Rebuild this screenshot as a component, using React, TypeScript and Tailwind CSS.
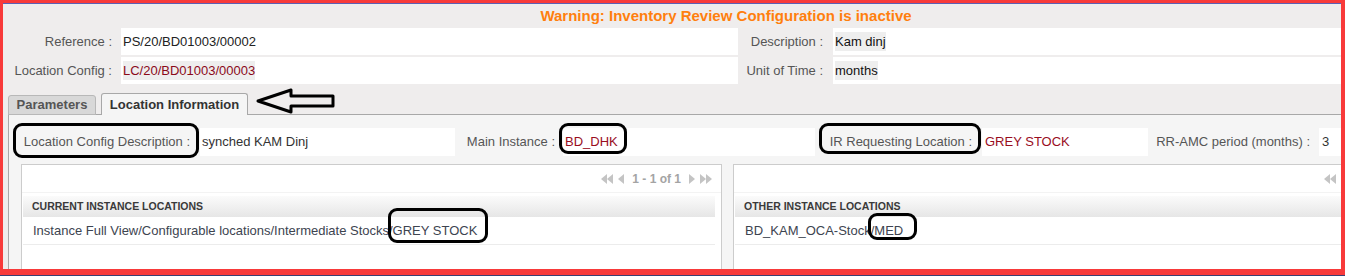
import React from "react";

const Tri = ({ dir, double }: { dir: "l" | "r"; double?: boolean }) => (
  <svg width={double ? 14 : 8} height="12" viewBox={double ? "0 0 14 12" : "0 0 8 12"} className="fill-[#c4c4c4]">
    {dir === "l" ? (
      double ? (
        <>
          <polygon points="1,6 7,1 7,11" />
          <polygon points="7,6 13,1 13,11" />
        </>
      ) : (
        <polygon points="1,6 7,1 7,11" />
      )
    ) : double ? (
      <>
        <polygon points="1,1 7,6 1,11" />
        <polygon points="7,1 13,6 7,11" />
      </>
    ) : (
      <polygon points="1,1 7,6 1,11" />
    )}
  </svg>
);

const Mark = ({ cls }: { cls: string }) => (
  <div className={`absolute rounded-[9px] border-[3px] border-black ${cls}`} />
);

export default function App() {
  return (
    <div className="relative h-[276px] w-[1345px] overflow-hidden bg-[#f83a3a] pl-[3px] pr-[4px] pt-[3px] pb-[6px] border-b border-[#3b3f72] font-['Liberation_Sans',Arial,sans-serif] text-[13px]">
      <div className="h-full overflow-hidden border-t border-[#5b5fb5] bg-[#efeded]">
        <div className="flex h-[24px] items-center justify-center pl-[108px] text-[15px] font-bold text-[#ff7f0e]">
          Warning: Inventory Review Configuration is inactive
        </div>

        {/* header fields */}
        <div className="flex flex-col gap-[2px]">
          <div className="flex h-[27px]">
            <div className="flex w-[118px] items-center justify-end pr-[9px] text-[#555]">Reference :</div>
            <div className="flex w-[617px] items-center bg-white pl-[2px] text-[#222]">PS/20/BD01003/00002</div>
            <div className="flex w-[95px] items-center justify-end pr-[10px] text-[#555]">Description :</div>
            <div className="flex flex-1 items-center bg-white pl-[2px] text-[#111]">
              <span className="bg-[#eeeeee]">Kam dinj</span>
            </div>
          </div>
          <div className="flex h-[27px]">
            <div className="flex w-[118px] items-center justify-end pr-[9px] text-[#555]">Location Config :</div>
            <div className="flex w-[617px] items-center bg-white pl-[2px] text-[#8b0a1a]">
              <span className="bg-[#eeeeee]">LC/20/BD01003/00003</span>
            </div>
            <div className="flex w-[95px] items-center justify-end pr-[10px] text-[#555]">Unit of Time :</div>
            <div className="flex flex-1 items-center bg-white pl-[2px] text-[#111]">
              <span className="bg-[#eeeeee]">months</span>
            </div>
          </div>
        </div>

        {/* tabs */}
        <div className="mt-[9px] flex items-end gap-[5px] pl-[5px]">
          <div className="mb-[-1px] flex h-[20px] w-[88px] items-center justify-center rounded-t-[3px] border border-[#b8b8b8] bg-[#d8d8d8] font-bold text-[#555]">
            Parameters
          </div>
          <div className="relative z-10 mb-[-1px] flex h-[22px] w-[147px] items-center justify-center rounded-t-[3px] border border-b-0 border-[#a8a8a8] bg-[#f5f5f5] font-bold text-[#333]">
            Location Information
          </div>
        </div>

        {/* tab panel */}
        <div className="ml-[5px] h-[200px] border-l border-t border-[#a8a8a8] bg-[#f5f5f5] pt-[13px]">
          <div className="flex h-[28px]">
            <div className="flex w-[191px] items-center justify-end pr-[10px] text-[#555]">Location Config Description :</div>
            <div className="flex w-[255px] items-center bg-white pl-[2px] text-[#333]">synched KAM Dinj</div>
            <div className="flex w-[108px] items-center justify-end pr-[8px] text-[#555]">Main Instance :</div>
            <div className="flex w-[252px] items-center bg-white pl-[2px] text-[#990d1e]">BD_DHK</div>
            <div className="flex w-[167px] items-center justify-end pr-[10px] text-[#555]">IR Requesting Location :</div>
            <div className="flex w-[166px] items-center bg-white pl-[3px] text-[#990d1e]">GREY STOCK</div>
            <div className="flex w-[171px] items-center justify-end pr-[9px] text-[#555]">RR-AMC period (months) :</div>
            <div className="flex flex-1 items-center bg-white pl-[3px] text-[#333]">3</div>
          </div>

          <div className="mt-[8px] flex gap-[11px] pl-[12px]">
            {/* left grid */}
            <div className="h-[120px] w-[701px] shrink-0 border border-[#cccccc] bg-white">
              <div className="flex h-[28px] items-center justify-end gap-[3px] border-b border-[#f3f3f3] pr-[8px]">
                <Tri dir="l" double />
                <Tri dir="l" />
                <span className="px-[4px] text-[12px] font-bold text-[#a4a4a4]">1 - 1 of 1</span>
                <Tri dir="r" />
                <Tri dir="r" double />
              </div>
              <div className="mt-[3px] mr-[6px] ml-[1px] flex h-[21px] items-center bg-gradient-to-b from-[#fbfbfb] to-[#e6e6e6] pl-[9px] text-[10.5px] font-bold text-[#3a3a3a]">
                CURRENT INSTANCE LOCATIONS
              </div>
              <div className="mr-[6px] ml-[1px] flex h-[28px] items-center border-b border-[#ececec] pl-[10px] text-[#3d4450]">
                Instance Full View/Configurable locations/Intermediate Stocks/GREY STOCK
              </div>
            </div>
            {/* right grid */}
            <div className="h-[120px] w-[620px] shrink-0 border border-[#cccccc] bg-white">
              <div className="flex h-[28px] items-center justify-end gap-[3px] border-b border-[#f3f3f3] pr-[4px]">
                <Tri dir="l" double />
                <Tri dir="l" />
              </div>
              <div className="mt-[3px] ml-[1px] flex h-[21px] items-center bg-gradient-to-b from-[#fbfbfb] to-[#e6e6e6] pl-[9px] text-[10.5px] font-bold text-[#3a3a3a]">
                OTHER INSTANCE LOCATIONS
              </div>
              <div className="ml-[1px] flex h-[28px] items-center border-b border-[#ececec] pl-[10px] text-[#3d4450]">
                BD_KAM_OCA-Stock/MED
              </div>
            </div>
          </div>
        </div>
      </div>

      {/* annotations */}
      <svg className="absolute left-[250px] top-[86px]" width="90" height="32" viewBox="250 86 90 32">
        <polygon
          points="258,101 291,90 291,96 333,96 333,106 291,106 291,112"
          fill="none"
          stroke="black"
          strokeWidth="3"
          strokeLinejoin="round"
        />
      </svg>
      <Mark cls="left-[13px] top-[123px] w-[186px] h-[35px]" />
      <Mark cls="left-[559px] top-[123px] w-[68px] h-[31px]" />
      <Mark cls="left-[819px] top-[123px] w-[162px] h-[31px]" />
      <Mark cls="left-[388px] top-[208px] w-[100px] h-[35px]" />
      <Mark cls="left-[868px] top-[213px] w-[49px] h-[27px]" />
    </div>
  );
}
